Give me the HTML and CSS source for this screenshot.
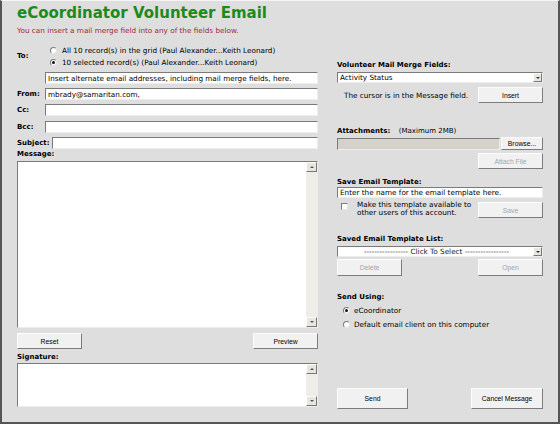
FILE: index.html
```html
<!DOCTYPE html>
<html lang="en">
<head>
    <meta charset="UTF-8" />
    <title>eCoordinator Volunteer Email</title>
    <link rel="stylesheet" href="styles.css">
</head>
<body>
    <div class="window">
        <div class="left">
            <h1 class="title">eCoordinator Volunteer Email</h1>
            <p class="note">You can insert a mail merge field into any of the fields below.</p>

            <div class="to-block">
                <span class="lbl">To:</span>
                <div class="to-opts">
                    <div class="opt"><span class="radio"></span>All 10 record(s) in the grid (Paul Alexander...Keith Leonard)</div>
                    <div class="opt"><span class="radio on"></span>10 selected record(s) (Paul Alexander...Keith Leonard)</div>
                </div>
            </div>
            <div class="field indent"><input class="text" value="Insert alternate email addresses, including mail merge fields, here."></div>
            <div class="field"><label class="lbl">From:</label><input class="text" value="mbrady@samaritan.com,"></div>
            <div class="field"><label class="lbl">Cc:</label><input class="text"></div>
            <div class="field f-bcc"><label class="lbl">Bcc:</label><input class="text"></div>
            <div class="field"><label class="lbl">Subject:</label><input class="text"></div>

            <div class="lbl block msg-lbl">Message:</div>
            <div class="textarea message">
                <div class="scroll"><span class="arr up"></span><span class="arr down"></span></div>
            </div>

            <div class="btn-row">
                <button class="btn">Reset</button>
                <button class="btn">Preview</button>
            </div>

            <div class="lbl block sig-lbl">Signature:</div>
            <div class="textarea signature">
                <div class="scroll"><span class="arr up"></span><span class="arr down"></span></div>
            </div>
        </div>

        <div class="right">
            <div class="lbl block merge-lbl">Volunteer Mail Merge Fields:</div>
            <div class="select"><span class="sel-text">Activity Status</span><span class="drop"></span></div>
            <div class="cursor-row">
                <span class="cursor-note">The cursor is in the Message field.</span>
                <button class="btn">Insert</button>
            </div>

            <div class="lbl block attach-lbl">Attachments: <span class="plain">(Maximum 2MB)</span></div>
            <div class="file-row">
                <div class="file-box"></div>
                <button class="btn browse">Browse...</button>
            </div>
            <div class="end-row"><button class="btn off">Attach File</button></div>

            <div class="lbl block save-lbl">Save Email Template:</div>
            <input class="text tpl-name" value="Enter the name for the email template here.">
            <div class="share-row">
                <span class="check"></span>
                <span class="share-text">Make this template available to<br>other users of this account.</span>
                <button class="btn off">Save</button>
            </div>

            <div class="lbl block list-lbl">Saved Email Template List:</div>
            <div class="select"><span class="sel-text centered">----------------- Click To Select -----------------</span><span class="drop"></span></div>
            <div class="pair-row">
                <button class="btn off tall">Delete</button>
                <button class="btn off tall">Open</button>
            </div>

            <div class="lbl block send-lbl">Send Using:</div>
            <div class="opt send-opt first"><span class="radio on"></span>eCoordinator</div>
            <div class="opt send-opt"><span class="radio"></span>Default email client on this computer</div>

            <div class="pair-row send-row">
                <button class="btn big">Send</button>
                <button class="btn big">Cancel Message</button>
            </div>
        </div>
    </div>
</body>
</html>
```

FILE: styles.css
```css
body {
    margin: 0;
    font-family: 'DejaVu Sans', Verdana, sans-serif;
    font-size: 7.25px;
    color: #000;
}
.window {
    width: 560px;
    height: 424px;
    box-sizing: border-box;
    background: #dedede;
    border: 2px solid #555;
    border-top: 1px solid #f6f6f6;
    padding-left: 15px;
    display: flex;
}
.left {
    width: 301px;
    display: flex;
    flex-direction: column;
}
.right {
    width: 206px;
    margin-left: 19px;
    display: flex;
    flex-direction: column;
}
.title {
    margin: 3px 0 0;
    font-size: 15px;
    line-height: 18px;
    font-weight: bold;
    color: #1d8a1d;
}
.note {
    margin: 4px 0 0;
    line-height: 9px;
    color: #a0283a;
}
.lbl {
    font-weight: bold;
    font-size: 7px;
    min-width: 25px;
    padding-right: 3px;
}
.lbl.block {
    line-height: 9px;
}
.plain {
    font-weight: normal;
    margin-left: 6px;
}
.to-block {
    margin-top: 9px;
    display: flex;
    align-items: center;
}
.to-opts {
    padding-left: 5px;
}
.opt {
    height: 12px;
    display: flex;
    align-items: center;
    gap: 5px;
}
.radio {
    width: 7px;
    height: 7px;
    box-sizing: border-box;
    border-radius: 50%;
    border: 1px solid;
    border-color: #7a7a7a #e4e4e4 #e4e4e4 #7a7a7a;
    background: #fff;
    display: flex;
    align-items: center;
    justify-content: center;
}
.radio.on::after {
    content: "";
    width: 3px;
    height: 3px;
    border-radius: 50%;
    background: #111;
}
.field {
    display: flex;
    align-items: center;
    margin-top: 4px;
}
.field.f-bcc {
    margin-top: 5px;
}
.field.indent {
    padding-left: 28px;
}
.text {
    flex: 1;
    min-width: 0;
    height: 12px;
    box-sizing: border-box;
    margin: 0;
    padding: 0 2px;
    font-family: 'DejaVu Sans', Verdana, sans-serif;
    font-size: 7.25px;
    color: #000;
    background: #fff;
    border: 1px solid;
    border-color: #7a7a7a #ededed #ededed #7a7a7a;
    outline: none;
}
.msg-lbl {
    margin-top: 1px;
}
.textarea {
    margin-top: 2px;
    box-sizing: border-box;
    background: #fff;
    border: 1px solid;
    border-color: #7a7a7a #ededed #ededed #7a7a7a;
    display: flex;
    justify-content: flex-end;
}
.message {
    height: 167px;
}
.signature {
    height: 44px;
    margin-top: 1px;
}
.scroll {
    width: 11px;
    background: #eeede7;
    display: flex;
    flex-direction: column;
    justify-content: space-between;
}
.arr {
    height: 10px;
    box-sizing: border-box;
    background: #e8e6de;
    border: 1px solid;
    border-color: #fff #777 #777 #fff;
    display: flex;
    align-items: center;
    justify-content: center;
}
.arr::after {
    content: "";
    border-left: 2px solid transparent;
    border-right: 2px solid transparent;
}
.arr.up::after {
    border-bottom: 2px solid #555;
}
.arr.down::after {
    border-top: 2px solid #555;
}
.btn {
    width: 65px;
    height: 16px;
    box-sizing: border-box;
    margin: 0;
    padding: 0;
    font-family: 'Liberation Sans', Arial, sans-serif;
    font-size: 6.8px;
    color: #000;
    background: #f1f1f1;
    border: 1px solid;
    border-color: #fdfdfd #7c7c7c #7c7c7c #fdfdfd;
}
.btn.off {
    color: #a6a6a6;
}
.btn.tall {
    height: 17px;
}
.btn.big {
    height: 21px;
    width: 71px;
}
.btn.big + .btn.big {
    width: 72px;
}
.btn-row {
    margin-top: 5px;
    display: flex;
    justify-content: space-between;
}
.sig-lbl {
    margin-top: 4px;
}
.merge-lbl {
    margin-top: 60px;
}
.select {
    margin-top: 2px;
    height: 11px;
    box-sizing: border-box;
    background: #fff;
    border: 1px solid;
    border-color: #7a7a7a #ededed #ededed #7a7a7a;
    display: flex;
    align-items: center;
}
.sel-text {
    flex: 1;
    padding-left: 2px;
    white-space: nowrap;
    overflow: hidden;
}
.sel-text.centered {
    text-align: center;
    color: #222;
}
.drop {
    width: 9px;
    height: 9px;
    box-sizing: border-box;
    background: #e8e6de;
    border: 1px solid;
    border-color: #fff #777 #777 #fff;
    display: flex;
    align-items: center;
    justify-content: center;
}
.drop::after {
    content: "";
    border-left: 2px solid transparent;
    border-right: 2px solid transparent;
    border-top: 2px solid #333;
}
.cursor-row {
    margin-top: 4px;
    display: flex;
    align-items: center;
    justify-content: space-between;
}
.cursor-note {
    padding-left: 7px;
}
.attach-lbl {
    margin-top: 24px;
}
.file-row {
    margin-top: 1px;
    height: 13px;
    display: flex;
    align-items: center;
}
.file-box {
    flex: 1;
    height: 12px;
    box-sizing: border-box;
    background: #d5d2cb;
    border: 1px solid;
    border-color: #7a7a7a #ededed #ededed #7a7a7a;
    margin-right: 1px;
}
.btn.browse {
    width: 42px;
    height: 13px;
}
.end-row {
    margin-top: 3px;
    display: flex;
    justify-content: flex-end;
}
.save-lbl {
    margin-top: 9px;
}
.tpl-name {
    flex: none;
    width: 100%;
    height: 11px;
}
.share-row {
    margin-top: 4px;
    display: flex;
    align-items: flex-start;
}
.check {
    width: 7px;
    height: 7px;
    box-sizing: border-box;
    margin: 1px 0 0 4px;
    background: #fff;
    border: 1px solid;
    border-color: #7a7a7a #e4e4e4 #e4e4e4 #7a7a7a;
}
.share-text {
    margin: -1px 0 0 9px;
    line-height: 8px;
}
.share-row .btn {
    margin-left: auto;
}
.list-lbl {
    margin-top: 17px;
}
.pair-row {
    margin-top: 2px;
    display: flex;
    justify-content: space-between;
}
.send-lbl {
    margin-top: 17px;
}
.send-opt {
    margin-top: 2px;
    padding-left: 6px;
    gap: 4px;
}
.send-row {
    margin-top: 58px;
}
```
